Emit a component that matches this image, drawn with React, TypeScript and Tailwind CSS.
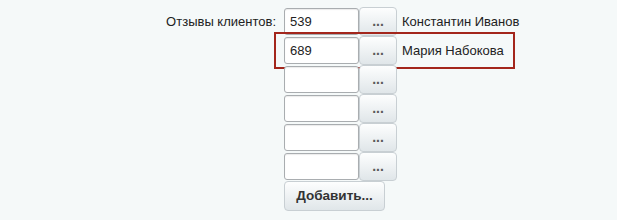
import React from "react";

const rows = [
  { value: "539", name: "Константин Иванов" },
  { value: "689", name: "Мария Набокова", marked: true },
  { value: "", name: "" },
  { value: "", name: "" },
  { value: "", name: "" },
  { value: "", name: "" },
];

function DotsButton() {
  return (
    <button
      type="button"
      className="h-[29px] w-[38px] shrink-0 rounded-[4px] border border-[#c8cfd3] bg-gradient-to-b from-[#fdfefe] to-[#e0e6e9] pb-[2px] text-[14px] font-bold leading-none text-[#5a5a5a]"
    >
      ...
    </button>
  );
}

export default function App() {
  return (
    <div
      className="h-[220px] w-[617px] bg-[#f5f9f9] text-[13px] text-[#222]"
      style={{ fontFamily: '"Liberation Sans", Arial, sans-serif' }}
    >
      <div className="flex pt-[7px]">
        <div className="w-[278px] shrink-0 pt-[5px] pr-[2px] text-right text-[#222]">
          Отзывы клиентов:
        </div>
        <div className="ml-[6px] flex flex-col">
          {rows.map((row, i) => (
            <div key={i} className="relative flex h-[29px] items-center">
              {row.marked && (
                <div className="pointer-events-none absolute left-[-10px] top-[-4px] h-[37px] w-[241px] border-2 border-[#a3261c]" />
              )}
              <input
                readOnly
                value={row.value}
                className="h-[27px] w-[75px] shrink-0 rounded-[3px] border border-[#a9adb0] bg-white px-[5px] text-[13px] text-[#222] shadow-[inset_0_1px_1px_rgba(0,0,0,0.08)] outline-none"
              />
              <DotsButton />
              {row.name && <span className="ml-[5px] whitespace-nowrap">{row.name}</span>}
            </div>
          ))}
          <button
            type="button"
            className="h-[30px] w-[101px] rounded-[4px] border border-[#c8cfd3] bg-gradient-to-b from-[#fdfefe] to-[#e0e6e9] text-[13.5px] font-bold text-[#333]"
          >
            Добавить...
          </button>
        </div>
      </div>
    </div>
  );
}
